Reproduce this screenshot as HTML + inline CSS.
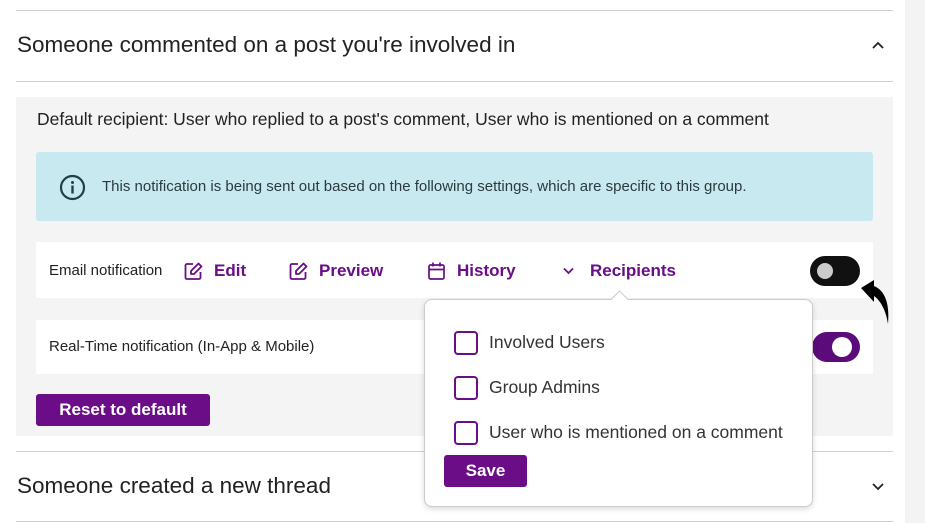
<!DOCTYPE html>
<html><head><style>
*{box-sizing:border-box;margin:0;padding:0}
body{width:925px;height:523px;overflow:hidden;background:#fff;font-family:"Liberation Sans",Arial,sans-serif;color:#222;position:relative}
.a{position:absolute}
.line{position:absolute;left:16px;width:877px;height:1px;background:#d0d0d0}
.h{position:absolute;left:17px;font-size:22.5px;color:#222}
.purple{color:#6a0d86;font-weight:bold;font-size:17px}
.cb{position:absolute;left:454px;width:24px;height:24px;border:2px solid #6a0d86;border-radius:4px}
.cl{position:absolute;left:489px;font-size:17.5px;color:#333}
</style></head><body>
<div class="a" style="left:905px;top:0;width:20px;height:523px;background:#f3f3f3"></div>
<div class="line" style="top:10px"></div>
<div class="h" style="top:32px">Someone commented on a post you're involved in</div>
<svg class="a" style="left:871px;top:40px" width="14" height="10" viewBox="0 0 14 10"><path d="M2 8 L7 3 L12 8" fill="none" stroke="#222" stroke-width="1.8"/></svg>
<div class="line" style="top:81px"></div>
<div class="a" style="left:16px;top:97px;width:877px;height:339px;background:#f4f4f4"></div>
<div class="a" style="left:37px;top:109px;font-size:17.5px;color:#222">Default recipient: User who replied to a post's comment, User who is mentioned on a comment</div>
<div class="a" style="left:36px;top:152px;width:837px;height:69px;background:#c8e9f0;border-radius:3px"></div>
<svg class="a" style="left:59px;top:174px" width="27" height="27" viewBox="0 0 27 27"><circle cx="13.5" cy="13.5" r="11.5" fill="none" stroke="#1f3f4a" stroke-width="2.2"/><circle cx="13.5" cy="8.5" r="1.5" fill="#1f3f4a"/><rect x="12.3" y="11.5" width="2.4" height="8" fill="#1f3f4a"/></svg>
<div class="a" style="left:102px;top:178px;font-size:15px;color:#2a3a40">This notification is being sent out based on the following settings, which are specific to this group.</div>
<div class="a" style="left:36px;top:242px;width:837px;height:56px;background:#fff"></div>
<div class="a" style="left:49px;top:262px;font-size:15px;color:#222">Email notification</div>
<svg class="a" style="left:183px;top:261px" width="21" height="21" viewBox="0 0 21 21"><path d="M10 3H4a1.5 1.5 0 0 0-1.5 1.5v12A1.5 1.5 0 0 0 4 18h12a1.5 1.5 0 0 0 1.5-1.5V11" fill="none" stroke="#6a0d86" stroke-width="1.8"/><path d="M15.5 2.5l3 3L11 13H8v-3z" fill="none" stroke="#6a0d86" stroke-width="1.8" stroke-linejoin="round"/></svg>
<div class="a purple" style="left:214px;top:261px">Edit</div>
<svg class="a" style="left:288px;top:261px" width="21" height="21" viewBox="0 0 21 21"><path d="M10 3H4a1.5 1.5 0 0 0-1.5 1.5v12A1.5 1.5 0 0 0 4 18h12a1.5 1.5 0 0 0 1.5-1.5V11" fill="none" stroke="#6a0d86" stroke-width="1.8"/><path d="M15.5 2.5l3 3L11 13H8v-3z" fill="none" stroke="#6a0d86" stroke-width="1.8" stroke-linejoin="round"/></svg>
<div class="a purple" style="left:319px;top:261px">Preview</div>
<svg class="a" style="left:427px;top:261px" width="19" height="20" viewBox="0 0 19 20"><rect x="2" y="4" width="15" height="14" rx="1.5" fill="none" stroke="#6a0d86" stroke-width="1.7"/><path d="M2 8.5h15M6 1.5v4M13 1.5v4" stroke="#6a0d86" stroke-width="1.7"/></svg>
<div class="a purple" style="left:457px;top:261px">History</div>
<svg class="a" style="left:562px;top:266px" width="13" height="9" viewBox="0 0 13 9"><path d="M2 2.5 L6.5 7 L11 2.5" fill="none" stroke="#6a0d86" stroke-width="1.8"/></svg>
<div class="a purple" style="left:590px;top:261px">Recipients</div>
<div class="a" style="left:810px;top:256px;width:50px;height:30px;background:#111;border-radius:15px"></div>
<div class="a" style="left:817px;top:263px;width:16px;height:16px;background:#ccc;border-radius:50%"></div>
<svg class="a" style="left:860px;top:280px" width="32" height="46" viewBox="0 0 32 46"><path d="M1 8 L14 0 L14 6 C24 10 30 22 28 44 C26 30 20 20 14 16 L14 22 Z" fill="#000"/></svg>
<div class="a" style="left:36px;top:320px;width:837px;height:54px;background:#fff"></div>
<div class="a" style="left:49px;top:338px;font-size:15px;color:#222">Real-Time notification (In-App &amp; Mobile)</div>
<div class="a" style="left:812px;top:332px;width:48px;height:30px;background:#5c0b7a;border-radius:15px"></div>
<div class="a" style="left:832px;top:337px;width:20px;height:20px;background:#fff;border-radius:50%"></div>
<div class="a" style="left:36px;top:394px;width:174px;height:32px;background:#6a0d86;border-radius:3px;color:#fff;font-weight:bold;font-size:17px;text-align:center;line-height:32px">Reset to default</div>
<div class="line" style="top:451px"></div>
<div class="h" style="top:473px">Someone created a new thread</div>
<svg class="a" style="left:871px;top:482px" width="14" height="10" viewBox="0 0 14 10"><path d="M2 2 L7 7 L12 2" fill="none" stroke="#222" stroke-width="1.8"/></svg>
<div class="line" style="top:521px"></div>
<div class="a" style="left:424px;top:299px;width:389px;height:208px;background:#fff;border:1px solid #ccc;border-radius:8px;box-shadow:0 2px 6px rgba(0,0,0,.15)"></div>
<div class="a" style="left:613px;top:293px;width:13px;height:13px;background:#fff;border-left:1px solid #ccc;border-top:1px solid #ccc;transform:rotate(45deg)"></div>
<div class="cb" style="top:331px"></div><div class="cl" style="top:332px">Involved Users</div>
<div class="cb" style="top:376px"></div><div class="cl" style="top:377px">Group Admins</div>
<div class="cb" style="top:421px"></div><div class="cl" style="top:422px">User who is mentioned on a comment</div>
<div class="a" style="left:444px;top:455px;width:83px;height:32px;background:#6a0d86;border-radius:3px;color:#fff;font-weight:bold;font-size:17px;text-align:center;line-height:32px">Save</div>
</body></html>
